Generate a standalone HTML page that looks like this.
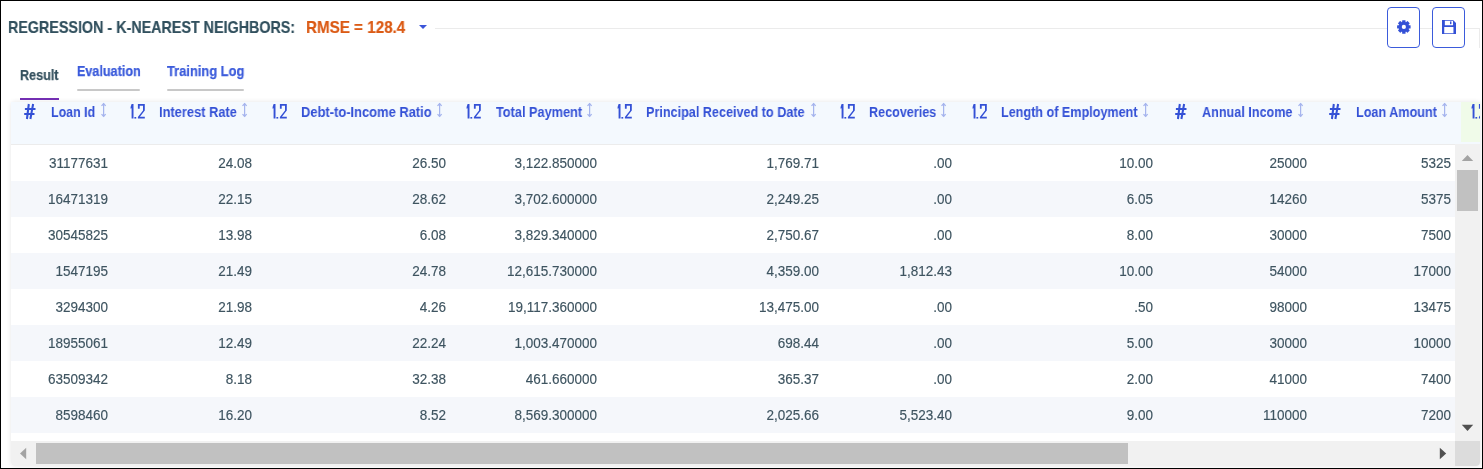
<!DOCTYPE html>
<html><head><meta charset="utf-8">
<style>
*{box-sizing:border-box;margin:0;padding:0}
html,body{width:1483px;height:469px;overflow:hidden;background:#fff}
body{font-family:"Liberation Sans",sans-serif;position:relative}
.frame{position:absolute;left:0;top:0;width:1483px;height:469px;border:1px solid #000;z-index:50}
.abs{position:absolute;white-space:nowrap;will-change:transform}
.title{-webkit-text-stroke:0.2px currentColor;left:7.5px;top:16.4px;font-weight:bold;font-size:17px;color:#31505e;transform-origin:0 0;line-height:24px;transform:scaleX(0.842)}
.rmse{-webkit-text-stroke:0.2px currentColor;left:305.5px;top:16.4px;font-weight:bold;font-size:17px;color:#db5a14;transform-origin:0 0;line-height:24px;transform:scaleX(0.894)}
.caret{left:419px;top:25px;width:0;height:0;border-left:4px solid transparent;border-right:4px solid transparent;border-top:4px solid #3b55d9}
.hline{left:435px;top:28px;width:1045px;height:1px;background:#ebebeb}
.vline{left:1479px;top:28px;width:1px;height:20px;background:#ebebeb}
.btn{top:7px;width:33px;height:41px;border:1px solid #3b5bdb;border-radius:4px;background:#fff}
.tab{font-weight:bold;font-size:14px;line-height:16px;transform-origin:0 0;-webkit-text-stroke:0.25px currentColor}
.table{left:11px;top:102px;width:1469px;height:364px;border-radius:2px 2px 4px 4px;background:#fff;box-shadow:0 0 5px rgba(0,0,0,0.10)}
.hdr{left:11px;top:102px;width:1469px;height:42px;background:#f4f9fe}
.hl{position:absolute;will-change:transform;top:104.4px;transform-origin:0 0;font-weight:bold;font-size:14.2px;color:#3451d6;line-height:16px;white-space:nowrap}
.ic{position:absolute}
.row{position:absolute;left:11px;width:1444px;height:36px}
.alt{background:#f5f7fb}
.c{-webkit-text-stroke:0.15px currentColor;position:absolute;transform:scaleX(0.964) translateZ(0);transform-origin:100% 0;font-size:14px;color:#3e5460;line-height:16px;white-space:nowrap;text-align:right;width:120px}
</style></head><body>
<div class="frame"></div>
<div class="abs title" id="title">REGRESSION - K-NEAREST NEIGHBORS:</div>
<div class="abs rmse" id="rmse">RMSE = 128.4</div>
<div class="abs caret"></div>
<div class="abs hline"></div>
<div class="abs vline"></div>
<div class="abs btn" style="left:1387px"></div>
<div class="abs btn" style="left:1432px"></div>

<div class="abs tab" style="left:20px;top:67px;color:#34505e;transform:scaleX(0.9)">Result</div>
<div class="abs" style="left:20px;top:98px;width:39px;height:2px;background:#7530b5"></div>
<div class="abs tab" style="left:77px;top:63px;color:#3b5bdb;transform:scaleX(0.9)">Evaluation</div>
<div class="abs" style="left:77px;top:89px;width:63px;height:2px;background:#c8c8c8;border-radius:1px"></div>
<div class="abs tab" style="left:167px;top:63px;color:#3b5bdb;transform:scaleX(0.92)">Training Log</div>
<div class="abs" style="left:167px;top:89px;width:77px;height:2px;background:#c8c8c8;border-radius:1px"></div>

<div class="abs table"></div>
<div class="abs hdr"></div>
<div class="abs" style="left:1461px;top:102px;width:19px;height:40px;background:#f0fbe9"></div>
<div class="abs" style="left:11px;top:144px;width:1469px;height:1px;background:#ececec"></div>

<svg class="ic" style="left:20.00px;top:100px" width="20" height="22" viewBox="0 0 20 22">
<g stroke="#3451d6" stroke-width="2.05" fill="none">
<line x1="8.8" y1="4" x2="6.95" y2="19"/><line x1="13.1" y1="4" x2="10.4" y2="19"/>
<line x1="4.9" y1="9" x2="15.5" y2="9"/><line x1="4.2" y1="14" x2="14.5" y2="14"/>
</g></svg>
<div class="hl" style="left:51.0px;transform:scaleX(0.8752)">Loan Id</div>
<svg class="ic" style="left:100.6px;top:102px" width="6" height="16" viewBox="0 0 6 16">
<g stroke="#a6b5ee" stroke-width="1.25" fill="none" stroke-linejoin="miter">
<line x1="2.6" y1="1.8" x2="2.6" y2="14.2"/>
<polyline points="0.5,3.9 2.6,1.7 4.7,3.9"/>
<polyline points="0.5,12.1 2.6,14.3 4.7,12.1"/>
</g><path d="M2.6 1 L3.9 2.6 H1.3 Z M2.6 15 L3.9 13.4 H1.3 Z" fill="#a6b5ee"/></svg>
<svg class="ic" style="left:128.90px;top:102px" width="18" height="19" viewBox="0 0 18 19">
<g fill="#3451d6">
<path d="M2.6 2 H4.5 V16.6 H2.6 V6.2 L1.6 6.8 V4.9 Z"/>
<rect x="5.4" y="15" width="1.8" height="1.6"/>
<path d="M8.9 2 H15.8 V8.6 L10.9 14.8 H15.8 V16.6 H8.9 V14.9 L14 8.4 V3.8 H10.7 V6.7 H8.9 Z"/>
</g></svg>
<div class="hl" style="left:159.0px;transform:scaleX(0.9063)">Interest Rate</div>
<svg class="ic" style="left:242.1px;top:102px" width="6" height="16" viewBox="0 0 6 16">
<g stroke="#a6b5ee" stroke-width="1.25" fill="none" stroke-linejoin="miter">
<line x1="2.6" y1="1.8" x2="2.6" y2="14.2"/>
<polyline points="0.5,3.9 2.6,1.7 4.7,3.9"/>
<polyline points="0.5,12.1 2.6,14.3 4.7,12.1"/>
</g><path d="M2.6 1 L3.9 2.6 H1.3 Z M2.6 15 L3.9 13.4 H1.3 Z" fill="#a6b5ee"/></svg>
<svg class="ic" style="left:270.80px;top:102px" width="18" height="19" viewBox="0 0 18 19">
<g fill="#3451d6">
<path d="M2.6 2 H4.5 V16.6 H2.6 V6.2 L1.6 6.8 V4.9 Z"/>
<rect x="5.4" y="15" width="1.8" height="1.6"/>
<path d="M8.9 2 H15.8 V8.6 L10.9 14.8 H15.8 V16.6 H8.9 V14.9 L14 8.4 V3.8 H10.7 V6.7 H8.9 Z"/>
</g></svg>
<div class="hl" style="left:300.8px;transform:scaleX(0.9109)">Debt-to-Income Ratio</div>
<svg class="ic" style="left:437.1px;top:102px" width="6" height="16" viewBox="0 0 6 16">
<g stroke="#a6b5ee" stroke-width="1.25" fill="none" stroke-linejoin="miter">
<line x1="2.6" y1="1.8" x2="2.6" y2="14.2"/>
<polyline points="0.5,3.9 2.6,1.7 4.7,3.9"/>
<polyline points="0.5,12.1 2.6,14.3 4.7,12.1"/>
</g><path d="M2.6 1 L3.9 2.6 H1.3 Z M2.6 15 L3.9 13.4 H1.3 Z" fill="#a6b5ee"/></svg>
<svg class="ic" style="left:465.30px;top:102px" width="18" height="19" viewBox="0 0 18 19">
<g fill="#3451d6">
<path d="M2.6 2 H4.5 V16.6 H2.6 V6.2 L1.6 6.8 V4.9 Z"/>
<rect x="5.4" y="15" width="1.8" height="1.6"/>
<path d="M8.9 2 H15.8 V8.6 L10.9 14.8 H15.8 V16.6 H8.9 V14.9 L14 8.4 V3.8 H10.7 V6.7 H8.9 Z"/>
</g></svg>
<div class="hl" style="left:496.0px;transform:scaleX(0.8972)">Total Payment</div>
<svg class="ic" style="left:587.1px;top:102px" width="6" height="16" viewBox="0 0 6 16">
<g stroke="#a6b5ee" stroke-width="1.25" fill="none" stroke-linejoin="miter">
<line x1="2.6" y1="1.8" x2="2.6" y2="14.2"/>
<polyline points="0.5,3.9 2.6,1.7 4.7,3.9"/>
<polyline points="0.5,12.1 2.6,14.3 4.7,12.1"/>
</g><path d="M2.6 1 L3.9 2.6 H1.3 Z M2.6 15 L3.9 13.4 H1.3 Z" fill="#a6b5ee"/></svg>
<svg class="ic" style="left:616.40px;top:102px" width="18" height="19" viewBox="0 0 18 19">
<g fill="#3451d6">
<path d="M2.6 2 H4.5 V16.6 H2.6 V6.2 L1.6 6.8 V4.9 Z"/>
<rect x="5.4" y="15" width="1.8" height="1.6"/>
<path d="M8.9 2 H15.8 V8.6 L10.9 14.8 H15.8 V16.6 H8.9 V14.9 L14 8.4 V3.8 H10.7 V6.7 H8.9 Z"/>
</g></svg>
<div class="hl" style="left:646.4px;transform:scaleX(0.8899)">Principal Received to Date</div>
<svg class="ic" style="left:810.7px;top:102px" width="6" height="16" viewBox="0 0 6 16">
<g stroke="#a6b5ee" stroke-width="1.25" fill="none" stroke-linejoin="miter">
<line x1="2.6" y1="1.8" x2="2.6" y2="14.2"/>
<polyline points="0.5,3.9 2.6,1.7 4.7,3.9"/>
<polyline points="0.5,12.1 2.6,14.3 4.7,12.1"/>
</g><path d="M2.6 1 L3.9 2.6 H1.3 Z M2.6 15 L3.9 13.4 H1.3 Z" fill="#a6b5ee"/></svg>
<svg class="ic" style="left:839.10px;top:102px" width="18" height="19" viewBox="0 0 18 19">
<g fill="#3451d6">
<path d="M2.6 2 H4.5 V16.6 H2.6 V6.2 L1.6 6.8 V4.9 Z"/>
<rect x="5.4" y="15" width="1.8" height="1.6"/>
<path d="M8.9 2 H15.8 V8.6 L10.9 14.8 H15.8 V16.6 H8.9 V14.9 L14 8.4 V3.8 H10.7 V6.7 H8.9 Z"/>
</g></svg>
<div class="hl" style="left:868.9px;transform:scaleX(0.8881)">Recoveries</div>
<svg class="ic" style="left:941.4px;top:102px" width="6" height="16" viewBox="0 0 6 16">
<g stroke="#a6b5ee" stroke-width="1.25" fill="none" stroke-linejoin="miter">
<line x1="2.6" y1="1.8" x2="2.6" y2="14.2"/>
<polyline points="0.5,3.9 2.6,1.7 4.7,3.9"/>
<polyline points="0.5,12.1 2.6,14.3 4.7,12.1"/>
</g><path d="M2.6 1 L3.9 2.6 H1.3 Z M2.6 15 L3.9 13.4 H1.3 Z" fill="#a6b5ee"/></svg>
<svg class="ic" style="left:970.60px;top:102px" width="18" height="19" viewBox="0 0 18 19">
<g fill="#3451d6">
<path d="M2.6 2 H4.5 V16.6 H2.6 V6.2 L1.6 6.8 V4.9 Z"/>
<rect x="5.4" y="15" width="1.8" height="1.6"/>
<path d="M8.9 2 H15.8 V8.6 L10.9 14.8 H15.8 V16.6 H8.9 V14.9 L14 8.4 V3.8 H10.7 V6.7 H8.9 Z"/>
</g></svg>
<div class="hl" style="left:1000.5px;transform:scaleX(0.8881)">Length of Employment</div>
<svg class="ic" style="left:1142.6px;top:102px" width="6" height="16" viewBox="0 0 6 16">
<g stroke="#a6b5ee" stroke-width="1.25" fill="none" stroke-linejoin="miter">
<line x1="2.6" y1="1.8" x2="2.6" y2="14.2"/>
<polyline points="0.5,3.9 2.6,1.7 4.7,3.9"/>
<polyline points="0.5,12.1 2.6,14.3 4.7,12.1"/>
</g><path d="M2.6 1 L3.9 2.6 H1.3 Z M2.6 15 L3.9 13.4 H1.3 Z" fill="#a6b5ee"/></svg>
<svg class="ic" style="left:1170.80px;top:100px" width="20" height="22" viewBox="0 0 20 22">
<g stroke="#3451d6" stroke-width="2.05" fill="none">
<line x1="8.8" y1="4" x2="6.95" y2="19"/><line x1="13.1" y1="4" x2="10.4" y2="19"/>
<line x1="4.9" y1="9" x2="15.5" y2="9"/><line x1="4.2" y1="14" x2="14.5" y2="14"/>
</g></svg>
<div class="hl" style="left:1201.9px;transform:scaleX(0.8889)">Annual Income</div>
<svg class="ic" style="left:1297.6px;top:102px" width="6" height="16" viewBox="0 0 6 16">
<g stroke="#a6b5ee" stroke-width="1.25" fill="none" stroke-linejoin="miter">
<line x1="2.6" y1="1.8" x2="2.6" y2="14.2"/>
<polyline points="0.5,3.9 2.6,1.7 4.7,3.9"/>
<polyline points="0.5,12.1 2.6,14.3 4.7,12.1"/>
</g><path d="M2.6 1 L3.9 2.6 H1.3 Z M2.6 15 L3.9 13.4 H1.3 Z" fill="#a6b5ee"/></svg>
<svg class="ic" style="left:1324.50px;top:100px" width="20" height="22" viewBox="0 0 20 22">
<g stroke="#3451d6" stroke-width="2.05" fill="none">
<line x1="8.8" y1="4" x2="6.95" y2="19"/><line x1="13.1" y1="4" x2="10.4" y2="19"/>
<line x1="4.9" y1="9" x2="15.5" y2="9"/><line x1="4.2" y1="14" x2="14.5" y2="14"/>
</g></svg>
<div class="hl" style="left:1355.6px;transform:scaleX(0.8899)">Loan Amount</div>
<svg class="ic" style="left:1442.2px;top:102px" width="6" height="16" viewBox="0 0 6 16">
<g stroke="#a6b5ee" stroke-width="1.25" fill="none" stroke-linejoin="miter">
<line x1="2.6" y1="1.8" x2="2.6" y2="14.2"/>
<polyline points="0.5,3.9 2.6,1.7 4.7,3.9"/>
<polyline points="0.5,12.1 2.6,14.3 4.7,12.1"/>
</g><path d="M2.6 1 L3.9 2.6 H1.3 Z M2.6 15 L3.9 13.4 H1.3 Z" fill="#a6b5ee"/></svg>
<div style="position:absolute;left:1461px;top:100px;width:19px;height:24px;overflow:hidden"><svg class="ic" style="left:9.1px;top:2px" width="18" height="19" viewBox="0 0 18 19">
<g fill="#3451d6">
<path d="M2.6 2 H4.5 V16.6 H2.6 V6.2 L1.6 6.8 V4.9 Z"/>
<rect x="5.4" y="15" width="1.8" height="1.6"/>
<path d="M8.9 2 H15.8 V8.6 L10.9 14.8 H15.8 V16.6 H8.9 V14.9 L14 8.4 V3.8 H10.7 V6.7 H8.9 Z"/>
</g></svg></div>
<div class="row" style="top:145px"></div>
<div class="c" style="left:-11.6px;top:155.1px">31177631</div>
<div class="c" style="left:131.5px;top:155.1px">24.08</div>
<div class="c" style="left:326.2px;top:155.1px">26.50</div>
<div class="c" style="left:476.5px;top:155.1px">3,122.850000</div>
<div class="c" style="left:698.8px;top:155.1px">1,769.71</div>
<div class="c" style="left:831.5px;top:155.1px">.00</div>
<div class="c" style="left:1032.5px;top:155.1px">10.00</div>
<div class="c" style="left:1186.8px;top:155.1px">25000</div>
<div class="c" style="left:1330.7px;top:155.1px">5325</div>
<div class="row alt" style="top:181px"></div>
<div class="c" style="left:-11.6px;top:191.1px">16471319</div>
<div class="c" style="left:131.5px;top:191.1px">22.15</div>
<div class="c" style="left:326.2px;top:191.1px">28.62</div>
<div class="c" style="left:476.5px;top:191.1px">3,702.600000</div>
<div class="c" style="left:698.8px;top:191.1px">2,249.25</div>
<div class="c" style="left:831.5px;top:191.1px">.00</div>
<div class="c" style="left:1032.5px;top:191.1px">6.05</div>
<div class="c" style="left:1186.8px;top:191.1px">14260</div>
<div class="c" style="left:1330.7px;top:191.1px">5375</div>
<div class="row" style="top:217px"></div>
<div class="c" style="left:-11.6px;top:227.1px">30545825</div>
<div class="c" style="left:131.5px;top:227.1px">13.98</div>
<div class="c" style="left:326.2px;top:227.1px">6.08</div>
<div class="c" style="left:476.5px;top:227.1px">3,829.340000</div>
<div class="c" style="left:698.8px;top:227.1px">2,750.67</div>
<div class="c" style="left:831.5px;top:227.1px">.00</div>
<div class="c" style="left:1032.5px;top:227.1px">8.00</div>
<div class="c" style="left:1186.8px;top:227.1px">30000</div>
<div class="c" style="left:1330.7px;top:227.1px">7500</div>
<div class="row alt" style="top:253px"></div>
<div class="c" style="left:-11.6px;top:263.1px">1547195</div>
<div class="c" style="left:131.5px;top:263.1px">21.49</div>
<div class="c" style="left:326.2px;top:263.1px">24.78</div>
<div class="c" style="left:476.5px;top:263.1px">12,615.730000</div>
<div class="c" style="left:698.8px;top:263.1px">4,359.00</div>
<div class="c" style="left:831.5px;top:263.1px">1,812.43</div>
<div class="c" style="left:1032.5px;top:263.1px">10.00</div>
<div class="c" style="left:1186.8px;top:263.1px">54000</div>
<div class="c" style="left:1330.7px;top:263.1px">17000</div>
<div class="row" style="top:289px"></div>
<div class="c" style="left:-11.6px;top:299.1px">3294300</div>
<div class="c" style="left:131.5px;top:299.1px">21.98</div>
<div class="c" style="left:326.2px;top:299.1px">4.26</div>
<div class="c" style="left:476.5px;top:299.1px">19,117.360000</div>
<div class="c" style="left:698.8px;top:299.1px">13,475.00</div>
<div class="c" style="left:831.5px;top:299.1px">.00</div>
<div class="c" style="left:1032.5px;top:299.1px">.50</div>
<div class="c" style="left:1186.8px;top:299.1px">98000</div>
<div class="c" style="left:1330.7px;top:299.1px">13475</div>
<div class="row alt" style="top:325px"></div>
<div class="c" style="left:-11.6px;top:335.1px">18955061</div>
<div class="c" style="left:131.5px;top:335.1px">12.49</div>
<div class="c" style="left:326.2px;top:335.1px">22.24</div>
<div class="c" style="left:476.5px;top:335.1px">1,003.470000</div>
<div class="c" style="left:698.8px;top:335.1px">698.44</div>
<div class="c" style="left:831.5px;top:335.1px">.00</div>
<div class="c" style="left:1032.5px;top:335.1px">5.00</div>
<div class="c" style="left:1186.8px;top:335.1px">30000</div>
<div class="c" style="left:1330.7px;top:335.1px">10000</div>
<div class="row" style="top:361px"></div>
<div class="c" style="left:-11.6px;top:371.1px">63509342</div>
<div class="c" style="left:131.5px;top:371.1px">8.18</div>
<div class="c" style="left:326.2px;top:371.1px">32.38</div>
<div class="c" style="left:476.5px;top:371.1px">461.660000</div>
<div class="c" style="left:698.8px;top:371.1px">365.37</div>
<div class="c" style="left:831.5px;top:371.1px">.00</div>
<div class="c" style="left:1032.5px;top:371.1px">2.00</div>
<div class="c" style="left:1186.8px;top:371.1px">41000</div>
<div class="c" style="left:1330.7px;top:371.1px">7400</div>
<div class="row alt" style="top:397px"></div>
<div class="c" style="left:-11.6px;top:407.1px">8598460</div>
<div class="c" style="left:131.5px;top:407.1px">16.20</div>
<div class="c" style="left:326.2px;top:407.1px">8.52</div>
<div class="c" style="left:476.5px;top:407.1px">8,569.300000</div>
<div class="c" style="left:698.8px;top:407.1px">2,025.66</div>
<div class="c" style="left:831.5px;top:407.1px">5,523.40</div>
<div class="c" style="left:1032.5px;top:407.1px">9.00</div>
<div class="c" style="left:1186.8px;top:407.1px">110000</div>
<div class="c" style="left:1330.7px;top:407.1px">7200</div>

<!-- button icons -->
<svg class="ic" style="left:1396px;top:19px" width="16" height="16" viewBox="-7.85 -7.9 16 16">
<g fill="#3451d6">
<circle cx="0" cy="0" r="5.2"/>
<rect x="-1.7" y="-6.75" width="3.4" height="13.5" rx="0.5"/>
<rect x="-1.7" y="-6.75" width="3.4" height="13.5" rx="0.5" transform="rotate(45)"/>
<rect x="-1.7" y="-6.75" width="3.4" height="13.5" rx="0.5" transform="rotate(90)"/>
<rect x="-1.7" y="-6.75" width="3.4" height="13.5" rx="0.5" transform="rotate(135)"/>
</g>
<circle cx="0" cy="0" r="2.1" fill="#fff"/>
</svg>
<svg class="ic" style="left:1441.8px;top:19.8px" width="14.2" height="14.2" viewBox="0 0 14 14">
<path fill="#3451d6" fill-rule="evenodd" d="M0 0 H10.9 L14 3.1 V14 H0 Z M2.8 0.8 V5.1 H10.9 V0.8 Z M2.2 7 V13 H11.3 V7 Z"/>
<rect x="7.9" y="1.3" width="1.4" height="2.8" rx="0.4" fill="#3451d6"/>
</svg>

<!-- scrollbars -->
<div class="abs" style="left:1455px;top:144px;width:25px;height:297px;background:#f1f1f1"></div>
<svg class="ic" style="left:1455px;top:150px" width="25" height="16" viewBox="0 0 25 16"><polygon points="6.8,11 18.2,11 12.5,5" fill="#a3a3a3"/></svg>
<div class="abs" style="left:1457px;top:170px;width:21px;height:41px;background:#c1c1c1"></div>
<svg class="ic" style="left:1455px;top:420px" width="25" height="16" viewBox="0 0 25 16"><polygon points="6.8,4.8 18.2,4.8 12.5,11" fill="#505050"/></svg>
<div class="abs" style="left:11px;top:441px;width:1444px;height:25px;background:#f1f1f1;border-bottom-left-radius:4px"></div>
<svg class="ic" style="left:11px;top:441px" width="25" height="25" viewBox="0 0 25 25"><polygon points="15.2,6.8 15.2,18.2 9,12.5" fill="#a3a3a3"/></svg>
<div class="abs" style="left:36px;top:443px;width:1092px;height:21px;background:#c1c1c1"></div>
<svg class="ic" style="left:1430px;top:441px" width="25" height="25" viewBox="0 0 25 25"><polygon points="9.8,6.8 9.8,18.2 16.2,12.5" fill="#505050"/></svg>
<div class="abs" style="left:1455px;top:441px;width:25px;height:25px;background:#dcdcdc;border-bottom-right-radius:4px"></div>

</body></html>
